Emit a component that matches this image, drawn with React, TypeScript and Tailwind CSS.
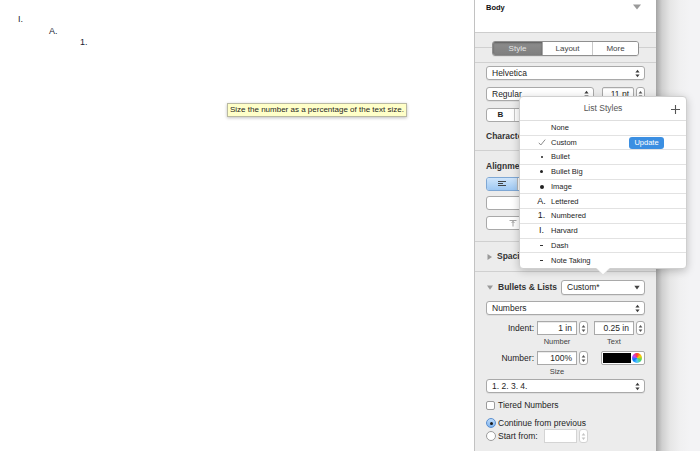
import clsx from "clsx";

const listStyles = [
  { name: "None", mark: "" },
  { name: "Custom", mark: "check" },
  { name: "Bullet", mark: "dot-s" },
  { name: "Bullet Big", mark: "dot-m" },
  { name: "Image", mark: "dot-l" },
  { name: "Lettered", mark: "A." },
  { name: "Numbered", mark: "1." },
  { name: "Harvard", mark: "I." },
  { name: "Dash", mark: "dash" },
  { name: "Note Taking", mark: "dash" },
];

function UpDown({ color = "#3a3a3a" }: { color?: string }) {
  return (
    <svg width="5" height="9" viewBox="0 0 5 9" className="shrink-0">
      <path d="M2.5 0.8L4.6 3.4H0.4Z" fill={color} />
      <path d="M2.5 8.2L0.4 5.6H4.6Z" fill={color} />
    </svg>
  );
}

function DownArrow({ color = "#444" }: { color?: string }) {
  return (
    <svg width="6" height="5" viewBox="0 0 6 5" className="shrink-0">
      <path d="M0.3 0.8H5.7L3 4.4Z" fill={color} />
    </svg>
  );
}

function Popup({ label, className, arrow = "updown" }: { label: string; className?: string; arrow?: "updown" | "down" }) {
  return (
    <div
      className={clsx(
        "flex h-[14px] items-center justify-between rounded-[3px] border border-[#a9a9a9] bg-white pl-[5px] pr-[4px] text-[8.5px] leading-none text-[#1e1e1e] shadow-[0_1px_0_rgba(0,0,0,0.06)]",
        className
      )}
    >
      <span>{label}</span>
      {arrow === "updown" ? <UpDown /> : <DownArrow />}
    </div>
  );
}

function Stepper({ disabled = false }: { disabled?: boolean }) {
  const c = disabled ? "#c4c4c4" : "#555";
  return (
    <div
      className={clsx(
        "flex h-[14px] w-[9px] shrink-0 items-center justify-center rounded-[3px] border bg-white",
        disabled ? "border-[#d2d2d2]" : "border-[#a9a9a9]"
      )}
    >
      <svg width="5" height="9" viewBox="0 0 5 9">
        <path d="M2.5 1L4.4 3.4H0.6Z" fill={c} />
        <path d="M2.5 8L0.6 5.6H4.4Z" fill={c} />
      </svg>
    </div>
  );
}

function Field({ value, className, disabled = false }: { value: string; className?: string; disabled?: boolean }) {
  return (
    <div
      className={clsx(
        "flex h-[14px] items-center justify-end border bg-white pr-[4px] text-[8.5px] leading-none text-[#1e1e1e]",
        disabled ? "border-[#d4d4d4]" : "border-[#a9a9a9] shadow-[inset_0_1px_0_rgba(0,0,0,0.08)]",
        className
      )}
    >
      {value}
    </div>
  );
}

function Mark({ mark }: { mark: string }) {
  if (mark === "check")
    return (
      <svg width="8" height="7" viewBox="0 0 8 7">
        <path d="M0.8 3.8L2.8 6L7.2 0.6" fill="none" stroke="#8a8a8a" strokeWidth="1" />
      </svg>
    );
  if (mark === "dot-s") return <span className="block h-[2px] w-[2px] rounded-full bg-[#222]" />;
  if (mark === "dot-m") return <span className="block h-[3px] w-[3px] rounded-full bg-[#222]" />;
  if (mark === "dot-l") return <span className="block h-[4px] w-[4px] rounded-full bg-[#222]" />;
  if (mark === "dash") return <span className="block h-[1px] w-[3px] bg-[#333]" />;
  if (mark) return <span className="text-[9px] leading-none text-[#222]">{mark}</span>;
  return null;
}

function ListStylesPopover() {
  return (
    <div className="absolute left-[519px] top-[96px] w-[168px]">
      <div className="rounded-[4px] border border-[#cfcfcf] bg-white shadow-[0_2px_8px_rgba(0,0,0,0.22)]">
        <div className="relative flex h-[24px] items-center justify-center border-b border-[#dedede] text-[8.5px] text-[#555]">
          List Styles
          <svg width="9" height="9" viewBox="0 0 9 9" className="absolute right-[6px] top-[8px]">
            <path d="M4.5 0V9M0 4.5H9" stroke="#555" strokeWidth="1.1" />
          </svg>
        </div>
        {listStyles.map((item, i) => (
          <div
            key={item.name}
            className={clsx(
              "flex h-[14.7px] items-center pl-[13px] text-[7.5px] leading-none text-[#1e1e1e]",
              i < listStyles.length - 1 && "border-b border-[#e2e2e2]"
            )}
          >
            <div className="flex w-[17px] items-center justify-center">
              <Mark mark={item.mark} />
            </div>
            <span className="ml-[1px]">{item.name}</span>
            {item.name === "Custom" && (
              <span className="ml-auto mr-[22px] flex h-[12px] w-[35px] items-center justify-center rounded-[3px] bg-[#3b8fe2] text-[7.5px] text-white">
                Update
              </span>
            )}
          </div>
        ))}
      </div>
      <svg width="14" height="8" viewBox="0 0 14 8" className="ml-[77px] -mt-[1px]">
        <path d="M0 0L7 7L14 0Z" fill="white" />
        <path d="M0.5 0.3L7 6.8L13.5 0.3" fill="none" stroke="#d6d6d6" strokeWidth="0.8" />
      </svg>
    </div>
  );
}

function Sidebar() {
  return (
    <div className="flex w-[182px] shrink-0 flex-col border-l border-[#c2c2c2] bg-[#ececec] text-[#1e1e1e]">
      <div className="flex h-[33px] items-start justify-between border-b border-[#cdcdcd] bg-white pl-[11px] pr-[15px] pt-[3px]">
        <span className="text-[7.5px] font-bold leading-[9px] text-[#111]">Body</span>
        <span className="mt-[1px]">
          <svg width="8" height="6" viewBox="0 0 8 6">
            <path d="M0 0.5H8L4 5.5Z" fill="#9a9a9a" />
          </svg>
        </span>
      </div>

      <div className="h-[30px] border-b border-[#d0d0d0] bg-[linear-gradient(to_bottom,transparent_14px,#d0d0d0_14px,#d0d0d0_15px,transparent_15px)] pt-[8px]">
        <div className="mx-auto flex h-[15px] w-[147px] overflow-hidden rounded-[3px] border border-[#8f8f8f] text-[8px] leading-none shadow-[0_1px_0_rgba(0,0,0,0.06)]">
          <div className="flex w-[49px] items-center justify-center bg-[linear-gradient(#8d8d8d,#7f7f7f)] text-[#e6e6e6] shadow-[inset_0_1px_2px_rgba(0,0,0,0.35)]">
            Style
          </div>
          <div className="flex w-[50px] items-center justify-center border-l border-[#a8a8a8] bg-white text-[#444]">
            Layout
          </div>
          <div className="flex flex-1 items-center justify-center border-l border-[#c8c8c8] bg-white text-[#444]">
            More
          </div>
        </div>
      </div>

      <div className="h-[88px] border-b border-[#d0d0d0] px-[11px] pt-[3px]">
        <Popup label="Helvetica" />
        <div className="mt-[7px] flex items-center">
          <Popup label="Regular" className="w-[108px]" />
          <Field value="11 pt" className="ml-[8px] w-[32px] rounded-[2px]" />
          <div className="ml-[2px]">
            <Stepper />
          </div>
        </div>
        <div className="mt-[7px] flex h-[14px] w-[108px] overflow-hidden rounded-[3px] border border-[#a9a9a9] bg-white text-[8px] font-bold leading-none">
          <div className="flex w-[27px] items-center justify-center">B</div>
          <div className="flex w-[27px] items-center justify-center border-l border-[#c8c8c8] italic">I</div>
          <div className="flex w-[27px] items-center justify-center border-l border-[#c8c8c8] underline">U</div>
          <div className="flex flex-1 items-center justify-center border-l border-[#c8c8c8] line-through">S</div>
        </div>
        <div className="mt-[9px] text-[8.5px] font-bold leading-[11px] text-[#333]">Character Styles</div>
      </div>

      <div className="h-[91px] border-b border-[#d0d0d0] px-[11px] pt-[10px]">
        <div className="text-[8.5px] font-bold leading-[11px] text-[#333]">Alignment</div>
        <div className="mt-[5px] flex h-[14px] w-[108px] overflow-hidden rounded-[3px] border border-[#7ea7d4]">
          <div className="flex w-[30px] items-center justify-center bg-[linear-gradient(#cfe5fb,#9ec8f3)]">
            <svg width="8" height="6" viewBox="0 0 8 6">
              <path d="M0 0.5H8M0 2.5H5M0 4.5H8" stroke="#333" strokeWidth="0.9" />
            </svg>
          </div>
          <div className="flex-1 border-l border-[#b8b8b8] bg-white" />
        </div>
        <div className="mt-[5px] h-[14px] w-[108px] rounded-[3px] border border-[#a9a9a9] bg-white" />
        <div className="mt-[6px] flex h-[14px] w-[108px] items-center rounded-[3px] border border-[#a9a9a9] bg-white pl-[22px]">
          <svg width="8" height="7" viewBox="0 0 8 7">
            <path d="M0.5 0.5H7.5M4 1V6.5M2.5 3L4 1.5L5.5 3" fill="none" stroke="#9a9a9a" strokeWidth="0.9" />
          </svg>
        </div>
      </div>

      <div className="flex h-[30px] items-center border-b border-[#d0d0d0] pl-[12px] text-[8.5px] font-bold text-[#333]">
        <svg width="5" height="6" viewBox="0 0 5 6" className="mr-[5px]">
          <path d="M0.5 0L5 3L0.5 6Z" fill="#999" />
        </svg>
        Spacing
      </div>

      <div className="flex-1 pl-[11px] pr-[11px] pt-[8px] text-[8.5px] leading-none">
        <div className="flex items-center">
          <svg width="6" height="5" viewBox="0 0 6 5" className="ml-[1px] mr-[5px]">
            <path d="M0 0.5H6L3 4.8Z" fill="#999" />
          </svg>
          <span className="font-bold text-[#333]">Bullets &amp; Lists</span>
          <Popup label="Custom*" arrow="down" className="ml-auto h-[15px] w-[84px]" />
        </div>
        <Popup label="Numbers" className="mt-[6px]" />

        <div className="mt-[6px] flex items-center">
          <span className="w-[48px] text-right">Indent:</span>
          <Field value="1 in" className="ml-[3px] w-[40px]" />
          <div className="ml-[2px]">
            <Stepper />
          </div>
          <Field value="0.25 in" className="ml-[6px] w-[40px]" />
          <div className="ml-[2px]">
            <Stepper />
          </div>
        </div>
        <div className="mt-[2px] flex h-[10px] items-center text-[7.5px] text-[#444]">
          <span className="ml-[51px] w-[40px] text-center">Number</span>
          <span className="ml-[17px] w-[40px] text-center">Text</span>
        </div>

        <div className="mt-[4px] flex items-center">
          <span className="w-[48px] text-right">Number:</span>
          <Field value="100%" className="ml-[3px] w-[40px]" />
          <div className="ml-[2px]">
            <Stepper />
          </div>
          <div className="ml-[13px] flex h-[14px] flex-1 items-center rounded-[2px] border border-[#a9a9a9] bg-white p-[1px]">
            <div className="h-full flex-1 bg-black" />
            <div className="mx-[1px] h-[10px] w-[10px] rounded-full bg-[conic-gradient(#ff3b30,#ffcc00,#4cd964,#5ac8fa,#007aff,#c644fc,#ff3b30)]" />
          </div>
        </div>
        <div className="mt-[2px] flex h-[10px] items-center text-[7.5px] text-[#444]">
          <span className="ml-[51px] w-[40px] text-center">Size</span>
        </div>

        <Popup label="1. 2. 3. 4." className="mt-[2px]" />

        <div className="mt-[7px] flex h-[11px] items-center">
          <span className="block h-[9px] w-[9px] rounded-[2px] border border-[#9c9c9c] bg-white" />
          <span className="ml-[3px]">Tiered Numbers</span>
        </div>

        <div className="mt-[6px] flex h-[12px] items-center">
          <span className="flex h-[10px] w-[10px] items-center justify-center rounded-full border border-[#5a8fd0] bg-[linear-gradient(#bfdcfa,#7fb3ee)]">
            <span className="block h-[3px] w-[3px] rounded-full bg-[#1a1a1a]" />
          </span>
          <span className="ml-[2px]">Continue from previous</span>
        </div>
        <div className="flex h-[14px] items-center">
          <span className="block h-[10px] w-[10px] rounded-full border border-[#9c9c9c] bg-white" />
          <span className="ml-[2px]">Start from:</span>
          <Field value="" disabled className="ml-[6px] w-[33px]" />
          <div className="ml-[2px]">
            <Stepper disabled />
          </div>
        </div>
      </div>
    </div>
  );
}

export default function App() {
  return (
    <div className="relative flex h-[451px] w-[700px] overflow-hidden bg-white font-['Liberation_Sans',Arial,sans-serif]">
      <div className="w-[474px] shrink-0 pl-[18px] pt-[14px] text-[9px] leading-[11.5px] text-[#1a1d33]">
        <div>I.</div>
        <div className="ml-[31px]">A.</div>
        <div className="ml-[62px]">1.</div>
      </div>

      <Sidebar />

      <div className="flex-1 bg-[linear-gradient(to_right,#a4a4a4_0px,#cfcfcf_6px,#e6e6e6_14px,#f0f0f1_24px,#f3f3f5_34px)]" />

      <ListStylesPopover />

      <div className="absolute left-[227px] top-[103px] flex h-[14px] w-[180px] items-center border border-[#b9b9a2] bg-[#ffffc8] pl-[2px] text-[8px] leading-none text-[#1e1e1e] shadow-[0_1px_3px_rgba(0,0,0,0.25)]">
        Size the number as a percentage of the text size.
      </div>
    </div>
  );
}
